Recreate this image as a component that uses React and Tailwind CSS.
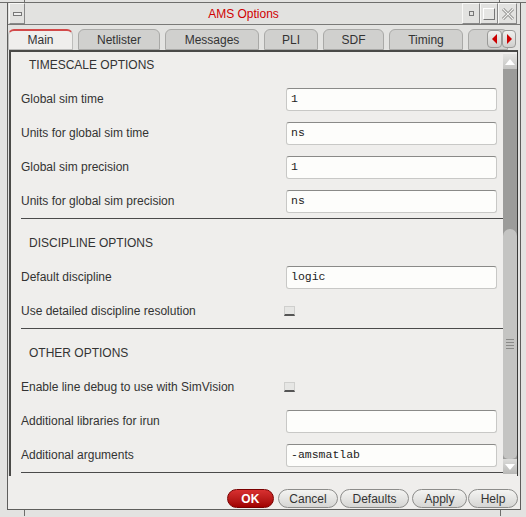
const sans = "font-['Liberation_Sans',Arial,sans-serif]";
const mono = "font-['Liberation_Mono','Courier_New',monospace]";

function Field({ value }) {
  return (
    <div
      className={`w-[211px] h-[23px] rounded-[3px] bg-[#fdfdfb] border border-[#c8c8c6] border-t-[#8a8a88] flex items-center pl-[4px] text-[11.5px] text-[#222] ${mono}`}
    >
      {value}
    </div>
  );
}

function Check() {
  return (
    <div className="ml-[-2px] w-[11px] h-[10px] bg-[#e6e6e4] border border-[#cfcfcd] border-b-[#555] border-b-[2px]" />
  );
}

function Row({ label, children }) {
  return (
    <div className="h-[34px] flex items-center">
      <div className="w-[275px] pl-[10px] text-[12px] text-[#333]">{label}</div>
      {children}
    </div>
  );
}

function Header({ text, first }) {
  return (
    <div
      className={`${first ? "h-[30px] pt-[5px]" : "h-[41px] pt-[16px]"} pl-[18px] text-[12px] leading-[16px] text-[#333]`}
    >
      {text}
    </div>
  );
}

function Sep() {
  return <div className="ml-[10px] h-px bg-[#4a4a4a]" />;
}

function Tab({ label, w, active }) {
  return (
    <div
      className={`h-[21px] rounded-t-[6px] flex items-center justify-center text-[12px] text-[#333] border ${
        active
          ? "bg-[#efeeec] border-[#bdbdbb] border-t-[#d24a4a] border-t-[2px]"
          : "bg-[#d0d0ce] border-[#a9a9a7]"
      }`}
      style={{ width: w }}
    >
      {label}
    </div>
  );
}

function Btn({ children, w, ml, red }) {
  return (
    <div
      className={`h-[19px] rounded-full flex items-center justify-center text-[12px] border ${
        red
          ? "bg-gradient-to-b from-[#d83030] to-[#a00000] border-[#7a0000] text-white font-bold tracking-wide"
          : "bg-gradient-to-b from-[#f4f4f2] to-[#d6d6d4] border-[#8c8c8a] text-[#333]"
      }`}
      style={{ width: w, marginLeft: ml }}
    >
      {children}
    </div>
  );
}

export default function App() {
  return (
    <div className={`w-[526px] h-[517px] bg-[#e3e3e1] overflow-hidden ${sans}`}>
      {/* top decoration */}
      <div className="h-[3px] flex border-b border-[#6e6e6c]">
        <div className="w-[25px] border-r border-[#6e6e6c]" />
        <div className="w-[475px] border-r border-[#6e6e6c]" />
      </div>
      <div className="ml-[7px] w-[514px] h-[507px] border-l border-r border-b border-[#5e5e5c] flex flex-col">
        {/* title bar */}
        <div className="h-[22px] flex items-stretch border-b border-[#7a7a78] bg-[#e2e2e0]">
          <div className="w-[16px] ml-px border border-[#f8f8f6] border-r-[#888] border-b-[#888] flex items-center justify-center">
            <div className="w-[9px] h-[4px] border border-[#777] bg-[#eee]" />
          </div>
          <div className="flex-1 flex items-center justify-center text-[12px] text-[#d00000]">AMS Options</div>
          <div className="w-[18px] border border-[#f8f8f6] border-r-[#888] border-b-[#888] flex items-center justify-center">
            <div className="w-[5px] h-[5px] border border-[#777]" />
          </div>
          <div className="w-[18px] border border-[#f8f8f6] border-r-[#888] border-b-[#888] flex items-center justify-center">
            <div className="w-[12px] h-[12px] border border-[#777] border-t-[#fff] border-l-[#fff] bg-[#e6e6e4]" />
          </div>
          <div className="w-[19px] border border-[#f8f8f6] border-r-[#888] border-b-[#888] flex items-center justify-center">
            <svg width="14" height="14" viewBox="0 0 14 14">
              <path d="M2 2 L12 12 M12 2 L2 12" stroke="#8a8a88" strokeWidth="3" />
              <path d="M2 2 L12 12 M12 2 L2 12" stroke="#f2f2f0" strokeWidth="1.2" />
            </svg>
          </div>
          <div className="w-[3px]" />
        </div>

        {/* tabs */}
        <div className="h-[25px] flex items-end gap-[5px] pl-0 overflow-hidden">
          <Tab label="Main" w={65} active />
          <Tab label="Netlister" w={82} />
          <Tab label="Messages" w={94} />
          <Tab label="PLI" w={54} />
          <Tab label="SDF" w={61} />
          <Tab label="Timing" w={74} />
          <div className="relative flex">
            <Tab label="" w={40} />
            <div className="absolute left-[19px] top-[1px] flex">
              <div className="w-[15px] h-[18px] rounded-[4px] bg-gradient-to-b from-[#f0f0ee] to-[#cfcfcd] border border-[#9a9a98] flex items-center justify-center">
                <div className="w-0 h-0 border-y-[5px] border-y-transparent border-r-[5px] border-r-[#cc0000]" />
              </div>
              <div className="w-[14px] h-[18px] rounded-[4px] bg-gradient-to-b from-[#f0f0ee] to-[#cfcfcd] border border-[#9a9a98] flex items-center justify-center">
                <div className="w-0 h-0 border-y-[5px] border-y-transparent border-l-[5px] border-l-[#cc0000]" />
              </div>
            </div>
          </div>
        </div>

        {/* panel */}
        <div className="ml-px w-[509px] h-[426px] border-t-2 border-l-2 border-r border-[#4a4a48] border-r-[#3a3a38] bg-[#efeeec] flex">
          <div className="w-[492px] flex flex-col">
            <Header text="TIMESCALE OPTIONS" first />
            <Row label="Global sim time"><Field value="1" /></Row>
            <Row label="Units for global sim time"><Field value="ns" /></Row>
            <Row label="Global sim precision"><Field value="1" /></Row>
            <Row label="Units for global sim precision"><Field value="ns" /></Row>
            <Sep />
            <Header text="DISCIPLINE OPTIONS" />
            <Row label="Default discipline"><Field value="logic" /></Row>
            <Row label="Use detailed discipline resolution"><Check /></Row>
            <Sep />
            <Header text="OTHER OPTIONS" />
            <Row label="Enable line debug to use with SimVision"><Check /></Row>
            <Row label="Additional libraries for irun"><Field value="" /></Row>
            <Row label="Additional arguments"><Field value="-amsmatlab" /></Row>
            <Sep />
          </div>
          {/* scrollbar */}
          <div className="w-[14px] flex flex-col pt-[2px] pb-[2px]">
            <div className="h-[15px] bg-gradient-to-b from-[#e4e4e2] to-[#c4c4c2] flex items-center justify-center">
              <div className="w-0 h-0 border-x-[5px] border-x-transparent border-b-[6px] border-b-white" />
            </div>
            <div className="flex-1 bg-[#9c9c9a] flex flex-col justify-end">
              <div className="h-[230px] rounded-t-[7px] rounded-b-[5px] bg-[#c4c4c2] flex items-center justify-center">
                <div className="flex flex-col gap-[2px]">
                  <div className="w-[8px] h-px bg-[#8a8a88]" />
                  <div className="w-[8px] h-px bg-[#8a8a88]" />
                  <div className="w-[8px] h-px bg-[#8a8a88]" />
                  <div className="w-[8px] h-px bg-[#8a8a88]" />
                </div>
              </div>
            </div>
            <div className="h-[15px] bg-gradient-to-b from-[#dcdcda] to-[#b8b8b6] flex items-center justify-center">
              <div className="w-0 h-0 border-x-[5px] border-x-transparent border-t-[6px] border-t-white" />
            </div>
          </div>
        </div>

        {/* buttons */}
        <div className="flex-1 bg-[#efeeec] flex items-start pt-[13px] pl-[219px]">
          <Btn w={47} ml={0} red>OK</Btn>
          <Btn w={60} ml={4}>Cancel</Btn>
          <Btn w={69} ml={2}>Defaults</Btn>
          <Btn w={55} ml={3}>Apply</Btn>
          <Btn w={50} ml={1}>Help</Btn>
        </div>
      </div>
      <div className="h-[6px] flex">
        <div className="w-[25px] border-r border-[#6e6e6c]" />
        <div className="w-[476px] border-r border-[#6e6e6c]" />
      </div>
    </div>
  );
}
